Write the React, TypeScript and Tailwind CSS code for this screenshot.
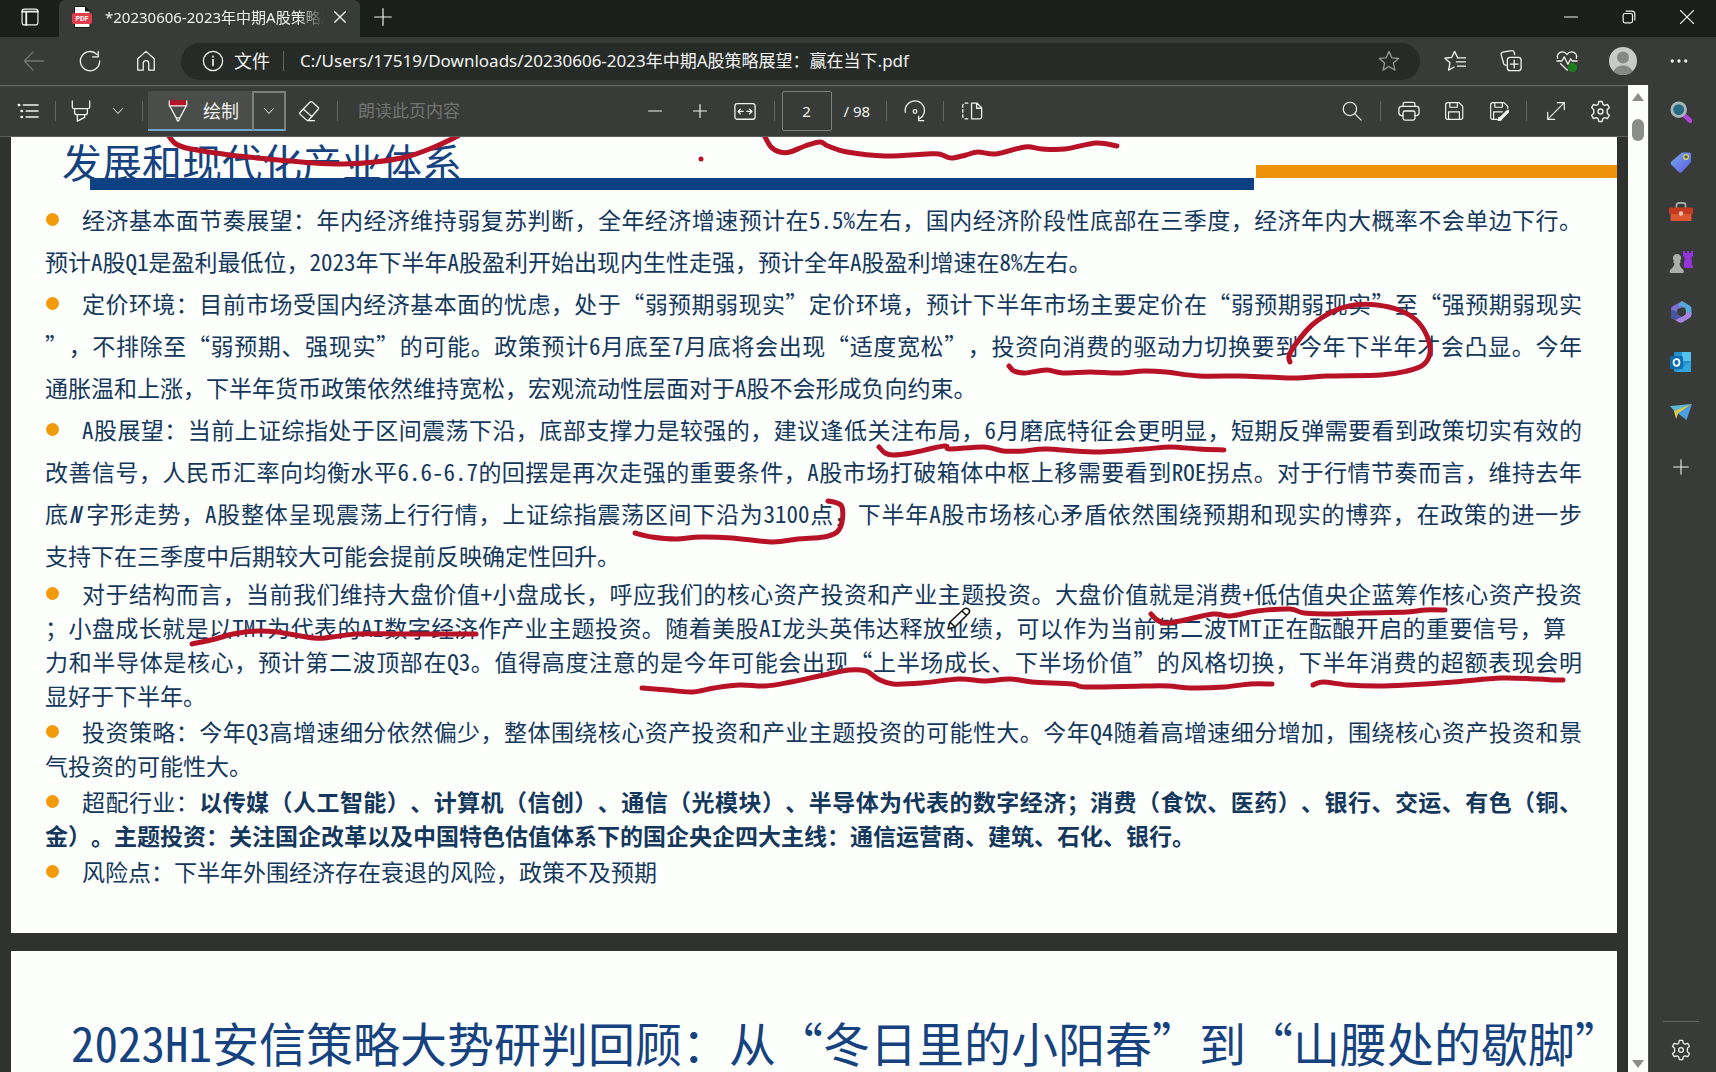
import { Children } from "react";
import type { ReactNode } from "react";

type Point = [number, number];

// Red pen strokes, in page coordinates
const strokes: Point[][] = [
  [[157, -2], [165, 7], [180, 12], [219, 18], [257, 22], [303, 26], [333, 27], [364, 25], [395, 20], [421, 11], [447, -1]],
  [[753, -2], [760, 10], [769, 15], [779, 15], [794, 9], [809, 5], [817, 9], [836, 15], [874, 19], [916, 17], [928, 17], [936, 20], [942, 21], [955, 18], [967, 15], [985, 17], [1014, 10], [1031, 12], [1054, 12], [1085, 6], [1106, 9]],
  [[998, 229], [1003, 234], [1014, 236], [1035, 233], [1052, 236], [1079, 235], [1108, 236], [1133, 234], [1155, 235], [1188, 239], [1228, 239], [1257, 240], [1286, 241], [1315, 239], [1370, 238], [1396, 234], [1412, 228], [1419, 216], [1416, 199], [1405, 183], [1388, 173], [1366, 168], [1344, 168], [1323, 174], [1301, 188], [1284, 208], [1278, 219], [1279, 225]],
  [[868, 310], [874, 316], [882, 318], [900, 316], [933, 309], [939, 312], [973, 310], [992, 314], [1013, 314], [1035, 312], [1083, 315], [1133, 312], [1159, 310], [1188, 312], [1213, 313]],
  [[624, 396], [641, 400], [665, 402], [689, 400], [721, 401], [761, 405], [787, 402], [813, 400], [826, 395], [831, 385], [831, 370], [826, 366], [817, 364]],
  [[181, 507], [204, 502], [222, 497], [246, 494], [266, 495], [303, 501], [321, 500], [346, 497], [390, 497], [465, 497]],
  [[1140, 477], [1146, 483], [1155, 486], [1169, 484], [1202, 477], [1219, 479], [1246, 474], [1279, 472], [1293, 476], [1326, 477], [1352, 476], [1396, 475], [1414, 473], [1434, 473]],
  [[631, 551], [656, 553], [681, 555], [703, 551], [729, 548], [754, 549], [780, 545], [813, 538], [838, 533], [855, 534], [867, 542], [882, 547], [911, 546], [948, 542], [973, 544], [999, 542], [1021, 545], [1061, 547], [1075, 550], [1133, 549], [1158, 549], [1180, 551], [1213, 550], [1239, 547], [1261, 547]],
  [[1302, 548], [1312, 545], [1337, 548], [1366, 549], [1396, 548], [1443, 545], [1490, 541], [1527, 542], [1543, 543], [1552, 543]],
];

function inkPath(pts: Point[]) {
  let d = `M${pts[0][0]} ${pts[0][1]}`;
  for (let i = 0; i < pts.length - 1; i++) {
    const a = pts[i - 1] || pts[i];
    const b = pts[i];
    const c = pts[i + 1];
    const e = pts[i + 2] || c;
    d += `C${b[0] + (c[0] - a[0]) / 6} ${b[1] + (c[1] - a[1]) / 6} ${c[0] - (e[0] - b[0]) / 6} ${c[1] - (e[1] - b[1]) / 6} ${c[0]} ${c[1]}`;
  }
  return d;
}

// Latin letters and digits use the font's half-width forms
function halfWidth(children: ReactNode) {
  return Children.map(children, (child) =>
    typeof child === "string"
      ? child.split(/([\x21-\x7e]+)/).map((part, i) =>
          i % 2 ? (
            <span key={i} className="[font-feature-settings:'hwid']">
              {part}
            </span>
          ) : (
            part
          ),
        )
      : child,
  );
}

function Icon({ children, size = 22 }: { children: ReactNode; size?: number }) {
  return (
    <svg
      width={size}
      height={size}
      viewBox="0 0 24 24"
      fill="none"
      stroke="currentColor"
      strokeWidth="1.4"
      strokeLinecap="round"
      strokeLinejoin="round"
      aria-hidden="true"
      className="shrink-0"
    >
      {children}
    </svg>
  );
}

function ToolButton({ label, className = "w-[45px]", children }: { label: string; className?: string; children: ReactNode }) {
  return (
    <button type="button" aria-label={label} title={label} className={`flex h-10 shrink-0 items-center justify-center ${className}`}>
      {children}
    </button>
  );
}

function Divider({ className }: { className: string }) {
  return <div className={`h-5 w-px shrink-0 bg-[#626562] ${className}`}></div>;
}

function Gear({ size = 22 }: { size?: number }) {
  return (
    <Icon size={size}>
      <path d="M10.2 1.6h3.6l.7 3 1.9 1.1 3-1 1.9 3.2-2.3 2.2v3.8l2.3 2.2-1.9 3.2-3-1-1.9 1.1-.7 3h-3.6l-.7-3-1.9-1.1-3 1-1.9-3.2L5 13.9v-3.8L2.7 7.9l1.9-3.2 3 1 1.9-1.1z" />
      <circle cx="12" cy="12" r="2.600" />
    </Icon>
  );
}

function TitleBar() {
  return (
    <div className="flex h-[37px] shrink-0 items-center bg-[#1b1f1c]">
      <ToolButton label="标签页操作菜单" className="w-[59px] pb-[3px]">
        <Icon size={20}>
          <rect x="2.500" y="2.500" width="19" height="19" rx="3" />
          <path d="M2.500 5.500h19M7.500 6v15.500" strokeWidth="2.200" />
        </Icon>
      </ToolButton>
      <div className="flex w-[301px] shrink-0 items-center self-stretch rounded-t-md bg-[#383b38] pb-[3px] pl-[13px]">
        <svg width="20" height="22" viewBox="0 0 20 22" aria-hidden="true" className="shrink-0">
          <path d="M2.500.500h10.500l5 5v16h-15.500z" fill="#fff" stroke="#141414" />
          <path d="M13 0v5.500h5.500z" fill="#141414" />
          <rect x="0" y="7" width="20" height="11" rx="2" fill="#e03e4c" />
          <text x="10" y="15" textAnchor="middle" fontSize="7" fontWeight="700" fill="#fff" fontFamily="Roboto, sans-serif">PDF</text>
        </svg>
        <div className="ml-[13px] w-[219px] overflow-hidden mask-r-from-88% mask-r-to-100% text-[15px] whitespace-nowrap">
          *20230606-2023年中期A股策略展望
        </div>
        <button type="button" aria-label="关闭标签页" className="flex w-8 items-center justify-center">
          <Icon size={16}>
            <path d="M4 4l16 16M20 4L4 20" strokeWidth="2" />
          </Icon>
        </button>
      </div>
      <ToolButton label="新建标签页" className="w-[45px] pb-[3px]">
        <Icon size={20}>
          <path d="M12 2v20M2 12h20" />
        </Icon>
      </ToolButton>
      <div className="flex-1"></div>
      <ToolButton label="最小化" className="w-[58px] pb-[3px]">
        <Icon size={14}>
          <path d="M1 12h22" strokeWidth="2" />
        </Icon>
      </ToolButton>
      <ToolButton label="还原" className="w-[58px] pb-[3px]">
        <Icon size={14}>
          <rect x="2" y="6" width="16" height="16" rx="3" strokeWidth="2" />
          <path d="M7 2h10a5 5 0 0 1 5 5v10" strokeWidth="2" />
        </Icon>
      </ToolButton>
      <ToolButton label="关闭" className="w-[58px] pb-[3px]">
        <Icon size={14}>
          <path d="M1 1l22 22M23 1L1 23" strokeWidth="2.200" />
        </Icon>
      </ToolButton>
    </div>
  );
}

function AddressBar() {
  return (
    <div className="flex h-12 shrink-0 items-center pr-[9px] pl-[6px]">
      <ToolButton label="返回" className="w-14 text-[#747774]">
        <Icon>
          <path d="M22.500 12H1.500M11 2L1.500 12 11 22" />
        </Icon>
      </ToolButton>
      <ToolButton label="刷新" className="w-14">
        <Icon>
          <path d="M22.500 12A10.500 10.500 0 1 1 19.500 4.800M21 1.500v6h-6" />
        </Icon>
      </ToolButton>
      <ToolButton label="主页" className="w-14">
        <Icon>
          <path d="M3 9.500L12 1.500l9 8V22h-6v-7.500a3 3 0 0 0-6 0V22H3z" />
        </Icon>
      </ToolButton>
      <div className="mr-[7px] ml-[7px] flex h-[37px] flex-1 items-center rounded-full bg-[#272b28] pr-5 pl-[21px]">
        <button type="button" className="flex items-center gap-[10px] text-[18px]">
          <Icon>
            <circle cx="12" cy="12" r="10.500" />
            <path d="M12 10.500v6.500M12 7v.500" strokeWidth="1.800" />
          </Icon>
          文件
        </button>
        <Divider className="ml-[13px]" />
        <input
          type="text"
          aria-label="地址和搜索栏"
          defaultValue="C:/Users/17519/Downloads/20230606-2023年中期A股策略展望：赢在当下.pdf"
          className="ml-4 min-w-0 flex-1 bg-transparent text-[17px] outline-none"
        />
        <button type="button" aria-label="添加到收藏夹" className="text-[#959895]">
          <Icon>
            <path d="M12 1.500l3 7 7.500.700-5.700 5L18.500 22 12 18l-6.500 4 1.700-7.800-5.700-5L9 8.500z" />
          </Icon>
        </button>
      </div>
      <ToolButton label="收藏夹" className="w-14">
        <Icon>
          <path d="M14.500 7.500L11.500 1.500l-3 6.500-7.500 1 5.500 5L5 22l6-3.500M14.500 8.500h9M13.500 13h10M14.500 17.500h9" />
        </Icon>
      </ToolButton>
      <ToolButton label="集锦" className="w-14">
        <Icon>
          <path d="M7 16.500H6.200a2.500 2.500 0 0 1-2.300-2L1.300 5.300A2.500 2.500 0 0 1 3 2.300l9.500-1.500a2.500 2.500 0 0 1 3 1.800L16 5" />
          <rect x="8" y="8" width="15" height="14.500" rx="3" />
          <path d="M15.500 11v8.500M11.200 15.300h8.600" />
        </Icon>
      </ToolButton>
      <ToolButton label="浏览器概要" className="w-14">
        <Icon>
          <path d="M1.800 9C.500 5 3.500 2 7 2c2.500 0 4 1.500 5 3 1-1.500 2.500-3 5-3 3.500 0 6.500 3 5.200 7M1 12h5.500L9 7.500l4 8 3-6 1.500 2.500H23M5 15l7.500 7" />
          <circle cx="18" cy="19" r="5" fill="#1c7d1c" stroke="none" />
        </Icon>
      </ToolButton>
      <ToolButton label="个人资料" className="w-14">
        <svg width="28" height="28" viewBox="0 0 28 28" aria-hidden="true">
          <circle cx="14" cy="14" r="14" fill="#c9cbc9" />
          <circle cx="14" cy="10.500" r="6" fill="#868986" />
          <path d="M4.500 24.200c2-4 5.500-5.700 9.500-5.700s7.500 1.700 9.500 5.700A14 14 0 0 1 14 28a14 14 0 0 1-9.500-3.800z" fill="#868986" />
        </svg>
      </ToolButton>
      <ToolButton label="设置及其他" className="w-14">
        <Icon size={18}>
          <g fill="currentColor" stroke="none">
            <circle cx="3" cy="12" r="2.200" />
            <circle cx="12" cy="12" r="2.200" />
            <circle cx="21" cy="12" r="2.200" />
          </g>
        </Icon>
      </ToolButton>
    </div>
  );
}

function Chevron() {
  return (
    <Icon size={12}>
      <path d="M3 7l9 10 9-10" strokeWidth="2" />
    </Icon>
  );
}

function PdfToolbar() {
  return (
    <div className="flex h-[51px] shrink-0 items-center border-b border-[#5b5e5b]">
      <div className="flex flex-1 items-center">
        <ToolButton label="目录" className="w-[55px]">
          <Icon>
            <path d="M7 5.500h16M10 12h13M10 18.500h13" strokeWidth="1.600" />
            <path d="M2 5.500h.400M5 12h.400M5 18.500h.400" strokeWidth="2.800" />
          </Icon>
        </ToolButton>
        <Divider className="" />
        <ToolButton label="突出显示" className="w-[50px]">
          <Icon>
            <path d="M2.500 1v6.500c0 1 .800 2 2 2h15c1.200 0 2-1 2-2V1M5 9.500v4c0 1.500 1 2.500 2.500 2.500h9c1.500 0 2.500-1 2.500-2.500v-4M8 16v7l8-4v-3" />
          </Icon>
        </ToolButton>
        <ToolButton label="突出显示颜色" className="w-6">
          <Chevron />
        </ToolButton>
        <Divider className="ml-3" />
        <div className="ml-[5px] flex bg-[#4a4d4a]">
          <button type="button" className="flex h-10 w-[104px] items-center gap-[14px] border-b-2 border-[#6ea5c8] pt-[2px] pl-[19px] text-[18px]">
            <Icon>
              <path d="M3 1h18v5H3z" fill="#b81226" stroke="#b81226" />
              <path d="M2.500 1v4.500l7.500 14h4l7.500-14V1M2.500 6.500h19M10.500 19.500v2L12 23l1.500-1.500v-2" />
            </Icon>
            绘制
          </button>
          <button type="button" aria-label="绘制选项" className="flex h-10 w-[34px] items-center justify-center border-2 border-[#7d807d] border-b-[#6ea5c8] bg-[#3f423f]">
            <Chevron />
          </button>
        </div>
        <ToolButton label="擦除" className="w-[46px]">
          <Icon>
            <path d="M15.500 2.200l6.300 5.600c.800.700.800 1.500.200 2.300L12 21.500c-.800.900-2 1-2.900.200l-6.500-5.800c-.900-.800-.900-1.700-.200-2.500l10.500-11c.800-.900 1.700-.900 2.600-.200zM6 10l9.300 8.200M10.500 22.500h7.500" />
          </Icon>
        </ToolButton>
        <Divider className="ml-[5px]" />
        <button type="button" disabled className="ml-5 text-[17px] text-[#727572]">
          朗读此页内容
        </button>
      </div>
      <div className="flex items-center pl-1">
        <ToolButton label="缩小">
          <Icon size={14}>
            <path d="M1 12h22" strokeWidth="2" />
          </Icon>
        </ToolButton>
        <ToolButton label="放大">
          <Icon size={14}>
            <path d="M1 12h22M12 1v22" strokeWidth="2" />
          </Icon>
        </ToolButton>
        <ToolButton label="适合页宽">
          <Icon>
            <rect x="1" y="4" width="22" height="17" rx="2.500" />
            <path d="M10 12.500H4.500M7 10l-2.500 2.500L7 15M14 12.500h5.500M17 10l2.500 2.500L17 15" />
          </Icon>
        </ToolButton>
        <Divider className="ml-[6px]" />
        <input
          type="text"
          aria-label="页码"
          defaultValue="2"
          className="ml-[7px] h-10 w-[50px] rounded-xs border border-[#7d807d] bg-transparent text-center text-[15px] outline-none"
        />
        <span className="ml-3 w-7 text-[15px] whitespace-nowrap">/ 98</span>
        <Divider className="ml-[14px]" />
        <ToolButton label="旋转" className="ml-[6px] w-[45px]">
          <Icon>
            <path d="M1.500 13.500A10.500 10.500 0 1 1 17 20.500M16 17.500v5h5.500" />
            <circle cx="12" cy="12.500" r="2" />
          </Icon>
        </ToolButton>
        <Divider className="ml-[5px]" />
        <ToolButton label="页面视图" className="ml-[6px] w-[45px]">
          <Icon>
            <path d="M11.500 3.500h6l5 5v10a2 2 0 0 1-2 2h-9zM17 3.500V9h5.500" />
            <path d="M7.500 3.500h-3a2.500 2.500 0 0 0-2.500 2.500v12a2.500 2.500 0 0 0 2.500 2.500h3" strokeDasharray="3 2.500" />
          </Icon>
        </ToolButton>
      </div>
      <div className="flex flex-1 items-center justify-end pr-[5px]">
        <ToolButton label="查找">
          <Icon size={20}>
            <circle cx="9.500" cy="9.500" r="8" />
            <path d="M15.500 15.500L23 23" />
          </Icon>
        </ToolButton>
        <Divider className="ml-[6px]" />
        <ToolButton label="打印" className="ml-[5px] w-[45px]">
          <Icon>
            <path d="M5.500 17H4a3 3 0 0 1-3-3v-4a3 3 0 0 1 3-3h16a3 3 0 0 1 3 3v4a3 3 0 0 1-3 3h-1.500" />
            <path d="M5.500 7V4.500a2 2 0 0 1 2-2h9a2 2 0 0 1 2 2V7" />
            <rect x="5.500" y="12" width="13" height="10" rx="2" />
          </Icon>
        </ToolButton>
        <ToolButton label="保存">
          <Icon size={20}>
            <path d="M2 4.500A2.500 2.500 0 0 1 4.500 2H18l4.500 4.500v13a2.500 2.500 0 0 1-2.500 2.500H4.500A2.500 2.500 0 0 1 2 19.500zM7 2v5.500h9V2M5.500 22v-9h13v9" />
          </Icon>
        </ToolButton>
        <ToolButton label="另存为">
          <Icon size={20}>
            <path d="M10 22H4.500A2.500 2.500 0 0 1 2 19.500v-15A2.500 2.500 0 0 1 4.500 2H18l4.500 4.500V9M7 2v5.500h9V2M5.500 22v-9H16" />
            <path d="M22.500 12.500l-9 9" strokeWidth="4" />
            <path d="M11 23.500l1-4 3 3z" fill="currentColor" />
          </Icon>
        </ToolButton>
        <Divider className="ml-[5px]" />
        <ToolButton label="进入全屏" className="ml-[6px] w-[45px]">
          <Icon size={20}>
            <path d="M2 22L22 2M13.500 2H22v8.500M2 13.500V22h8.500" />
          </Icon>
        </ToolButton>
        <ToolButton label="设置">
          <Gear size={23} />
        </ToolButton>
      </div>
    </div>
  );
}

// A justified line fills the text column, the others keep their own width
function Line({ children, tight, full = true, bold, bullet, className = "" }: { children: ReactNode; tight?: boolean; full?: boolean; bold?: boolean; bullet?: boolean; className?: string }) {
  return (
    <span className={`flex items-center ${tight ? "h-[34px]" : "h-[42px]"} ${bold ? "font-bold" : ""} ${className}`}>
      {bullet && <span className="mr-[23px] ml-px size-[13px] shrink-0 rounded-full bg-[#f19a0a]"></span>}
      <span className={`flex-1 whitespace-nowrap ${full ? "[text-align-last:justify]" : ""}`}>{halfWidth(children)}</span>
    </span>
  );
}

function OutlookPage() {
  return (
    <article className="relative bg-[#fdfffd] pb-[45px]">
      <header>
        <div className="flex h-[41px] items-end">
          <h1 className="relative z-10 h-[41px] flex-1 pl-[51px] text-[40px] leading-[48px] whitespace-nowrap text-[#16437f]">
            发展和现代化产业体系
          </h1>
          <div className="h-[13px] w-[361px] bg-[#ee9209]"></div>
        </div>
        <div className="mr-[363px] ml-[79px] h-3 bg-[#0e4084]"></div>
      </header>
      <div className="pt-2 pr-[35px] pl-[34px] text-[23px] text-[#14385c] [text-spacing-trim:space-all]">
        <p>
          <Line bullet>经济基本面节奏展望：年内经济维持弱复苏判断，全年经济增速预计在5.5%左右，国内经济阶段性底部在三季度，经济年内大概率不会单边下行。</Line>
          <Line full={false}>预计A股Q1是盈利最低位，2023年下半年A股盈利开始出现内生性走强，预计全年A股盈利增速在8%左右。</Line>
        </p>
        <p>
          <Line bullet>定价环境：目前市场受国内经济基本面的忧虑，处于“弱预期弱现实”定价环境，预计下半年市场主要定价在“弱预期弱现实”至“强预期弱现实</Line>
          <Line>”，不排除至“弱预期、强现实”的可能。政策预计6月底至7月底将会出现“适度宽松”，投资向消费的驱动力切换要到今年下半年才会凸显。今年</Line>
          <Line full={false}>通胀温和上涨，下半年货币政策依然维持宽松，宏观流动性层面对于A股不会形成负向约束。</Line>
        </p>
        <p>
          <Line bullet>A股展望：当前上证综指处于区间震荡下沿，底部支撑力是较强的，建议逢低关注布局，6月磨底特征会更明显，短期反弹需要看到政策切实有效的</Line>
          <Line>改善信号，人民币汇率向均衡水平6.6-6.7的回摆是再次走强的重要条件，A股市场打破箱体中枢上移需要看到ROE拐点。对于行情节奏而言，维持去年</Line>
          <Line>底<i className="font-medium [font-feature-settings:'hwid']">N</i> 字形走势，A股整体呈现震荡上行行情，上证综指震荡区间下沿为3100点，下半年A股市场核心矛盾依然围绕预期和现实的博弈，在政策的进一步</Line>
          <Line full={false}>支持下在三季度中后期较大可能会提前反映确定性回升。</Line>
        </p>
        <p>
          <Line tight bullet>对于结构而言，当前我们维持大盘价值+小盘成长，呼应我们的核心资产投资和产业主题投资。大盘价值就是消费+低估值央企蓝筹作核心资产投资</Line>
          <Line tight className="pr-4">；小盘成长就是以TMT为代表的AI数字经济作产业主题投资。随着美股AI龙头英伟达释放业绩，可以作为当前第二波TMT正在酝酿开启的重要信号，算</Line>
          <Line tight>力和半导体是核心，预计第二波顶部在Q3。值得高度注意的是今年可能会出现“上半场成长、下半场价值”的风格切换，下半年消费的超额表现会明</Line>
          <Line tight full={false}>显好于下半年。</Line>
        </p>
        <p className="pt-[2px]">
          <Line tight bullet>投资策略：今年Q3高增速细分依然偏少，整体围绕核心资产投资和产业主题投资的可能性大。今年Q4随着高增速细分增加，围绕核心资产投资和景</Line>
          <Line tight full={false}>气投资的可能性大。</Line>
        </p>
        <p className="pt-[2px]">
          <Line tight bullet>超配行业：<b>以传媒（人工智能）、计算机（信创）、通信（光模块）、半导体为代表的数字经济；消费（食饮、医药）、银行、交运、有色（铜、</b></Line>
          <Line tight bold full={false}>金）。主题投资：关注国企改革以及中国特色估值体系下的国企央企四大主线：通信运营商、建筑、石化、银行。</Line>
        </p>
        <p className="pt-[2px]">
          <Line tight bullet full={false}>风险点：下半年外围经济存在衰退的风险，政策不及预期</Line>
        </p>
      </div>
      <svg viewBox="0 0 1606 796" fill="none" aria-hidden="true" className="pointer-events-none absolute top-0 left-0 z-20 w-full">
        <g stroke="#b81226" strokeWidth="5" strokeLinecap="round" strokeLinejoin="round">
          {strokes.map((pts, i) => (
            <path key={i} d={inkPath(pts)} />
          ))}
        </g>
        <circle cx="690" cy="22" r="2.500" fill="#b81226" />
        {/* pencil pointer */}
        <path d="M937 492l2-7 14-13c3-2 7 1 5 4l-14 14zM951 474l5 5M939 485l5 5" fill="#fdfffd" stroke="#111" strokeWidth="1.500" strokeLinejoin="round" />
      </svg>
    </article>
  );
}

function ReviewPage() {
  return (
    <article className="mt-[18px] h-[796px] bg-[#fdfffd] pt-[65px]">
      <h1 className="pl-[60px] text-[47px] leading-[52px] whitespace-nowrap text-[#16437f] [text-spacing-trim:space-all]">
        {halfWidth("2023H1安信策略大势研判回顾：从“冬日里的小阳春”到“山腰处的歇脚”")}
      </h1>
    </article>
  );
}

function Sidebar() {
  return (
    <aside className="flex w-[68px] shrink-0 flex-col items-center border-l border-[#4c4f4c] pt-[2px] pr-[3px]">
      <ToolButton label="搜索" className="my-[5px] w-full">
        <svg width="22" height="22" viewBox="0 0 24 24" aria-hidden="true">
          <path d="M16 16l6 5.500" stroke="#b045dc" strokeWidth="5" strokeLinecap="round" />
          <circle cx="9.500" cy="9.500" r="7.500" fill="#276b83" stroke="#a9b6ba" strokeWidth="3" />
        </svg>
      </ToolButton>
      <ToolButton label="购物" className="my-[5px] w-full">
        <svg width="22" height="22" viewBox="0 0 24 24" aria-hidden="true">
          <defs>
            <linearGradient id="tag" x1="0" y1="0" x2="1" y2="1">
              <stop stopColor="#79a9f2" />
              <stop offset="1" stopColor="#5a5fe0" />
            </linearGradient>
          </defs>
          <path d="M13 1.500h8c1 0 2 1 2 2v8.500L13 23c-1 1-2.500 1-3.500 0L1.500 15c-1-1-1-2.500 0-3.500z" fill="url(#tag)" />
          <circle cx="17.500" cy="6.500" r="2.500" fill="#4c5550" stroke="#e3d868" strokeWidth="1.400" />
        </svg>
      </ToolButton>
      <ToolButton label="工具" className="my-[5px] w-full">
        <svg width="24" height="22" viewBox="0 0 24 22" aria-hidden="true">
          <path d="M7.500 7V4c0-1.500 1-2 2-2h5c1 0 2 .500 2 2v3" fill="none" stroke="#a7a9a7" strokeWidth="1.800" />
          <rect x="1.500" y="12" width="21" height="8" rx="1" fill="#dc5730" />
          <rect x="0" y="6.500" width="24" height="6.500" rx="1.200" fill="#c43a1f" />
          <circle cx="12" cy="12.500" r="2.200" fill="#eec2b8" />
        </svg>
      </ToolButton>
      <ToolButton label="游戏" className="my-[5px] w-full">
        <svg width="24" height="24" viewBox="0 0 24 24" aria-hidden="true">
          <path d="M14 1h2v2h2V1h2v2h2V1h2v5l-1.500 1.500.500 7 1.500 3.500h-9l-1-3 1.500-7L14 6z" fill="#9334dc" />
          <path d="M8 4a4 4 0 0 1 3 6.800l.800 1.200-1.300 1.500c.500 3 1.500 4.500 3.500 6 1 .800 1 3.500 0 3.500H1.500c-1 0-1-2.700 0-3.500 2-1.500 3.500-3 4-6L4 12l1-1.200A4 4 0 0 1 8 4z" fill="#acaeac" />
        </svg>
      </ToolButton>
      <ToolButton label="Microsoft 365" className="my-[5px] w-full">
        <svg width="22" height="24" viewBox="0 0 22 24" aria-hidden="true">
          <path d="M12 1L3 6C1.500 7 1 8 1 9.500V17l6.500-2V9.500L15 7z" fill="#7b6fd0" />
          <path d="M12 1l7.500 4.500C21 6.500 21.500 8 21.500 9.500V15l-6-3.500V8L8 5z" fill="#55a9dc" />
          <path d="M21.500 13.500c0 2-.500 3.500-2 4.500L13 22c-1.500 1-3 1-4.500 0L1 17.500l7-2.500 3.500 2 4-2.500v-3z" fill="#a884e0" />
          <path d="M1 9.500l6.500 2.500v3.500L11.500 17 5 20l-4-3z" fill="#44549f" />
          <path d="M7.500 9.500l4-2 4 2.500v4l-4 2.500-4-2z" fill="#383b38" />
        </svg>
      </ToolButton>
      <ToolButton label="Outlook" className="my-[5px] w-full">
        <svg width="22" height="22" viewBox="0 0 22 22" aria-hidden="true">
          <rect x="4" y="1" width="17" height="20" rx="1" fill="#2490cf" />
          <path d="M12 1h9v9h-9z" fill="#4fc3ec" />
          <path d="M21 10v11H6z" fill="#30a6dd" />
          <rect x="0" y="5" width="13" height="13" rx="1.500" fill="#0b6cb0" />
          <ellipse cx="6.500" cy="11.500" rx="3" ry="3.300" fill="none" stroke="#fff" strokeWidth="1.800" />
        </svg>
      </ToolButton>
      <ToolButton label="Drop" className="my-[5px] w-full">
        <svg width="22" height="18" viewBox="0 0 22 18" aria-hidden="true">
          <path d="M0 3L22 1 6 10z" fill="#5cb6d6" />
          <path d="M22 1L4 8l2 8 2-5z" fill="#d9c84b" />
          <path d="M22 1l-5.500 16L8 10.500z" fill="#4a9ee6" />
        </svg>
      </ToolButton>
      <ToolButton label="自定义" className="mt-[10px] w-full">
        <Icon size={16}>
          <path d="M12 1v22M1 12h22" strokeWidth="1.600" />
        </Icon>
      </ToolButton>
      <div className="mt-auto mb-2 h-px w-9 bg-[#656865]"></div>
      <ToolButton label="侧边栏设置" className="mb-[2px] w-full">
        <Gear />
      </ToolButton>
    </aside>
  );
}

export default function App() {
  return (
    <div lang="zh-CN" className="flex h-screen flex-col overflow-hidden bg-[#383b38] font-['Noto_Sans','Noto_Sans_CJK_SC',sans-serif] text-[#f1f3f1]">
      <TitleBar />
      <AddressBar />
      <div className="flex min-h-0 flex-1">
        <div className="flex min-w-0 flex-1 flex-col border-t border-[#686b68]">
          <PdfToolbar />
          <main className="min-h-0 flex-1 overflow-hidden bg-[#2f322f] px-[11px] font-['Noto_Sans_CJK_SC',sans-serif]">
            <OutlookPage />
            <ReviewPage />
          </main>
        </div>
        <div className="flex w-5 shrink-0 flex-col items-center bg-[#fdfffd] pt-2 pb-1">
          <div className="h-0 w-0 border-x-[6px] border-b-8 border-x-transparent border-b-[#8b8d8b]"></div>
          <div className="mt-[18px] h-[22px] w-3 rounded-full bg-[#8b8d8b]"></div>
          <div className="mt-auto h-0 w-0 border-x-[6px] border-t-8 border-x-transparent border-t-[#8b8d8b]"></div>
        </div>
        <Sidebar />
      </div>
    </div>
  );
}
